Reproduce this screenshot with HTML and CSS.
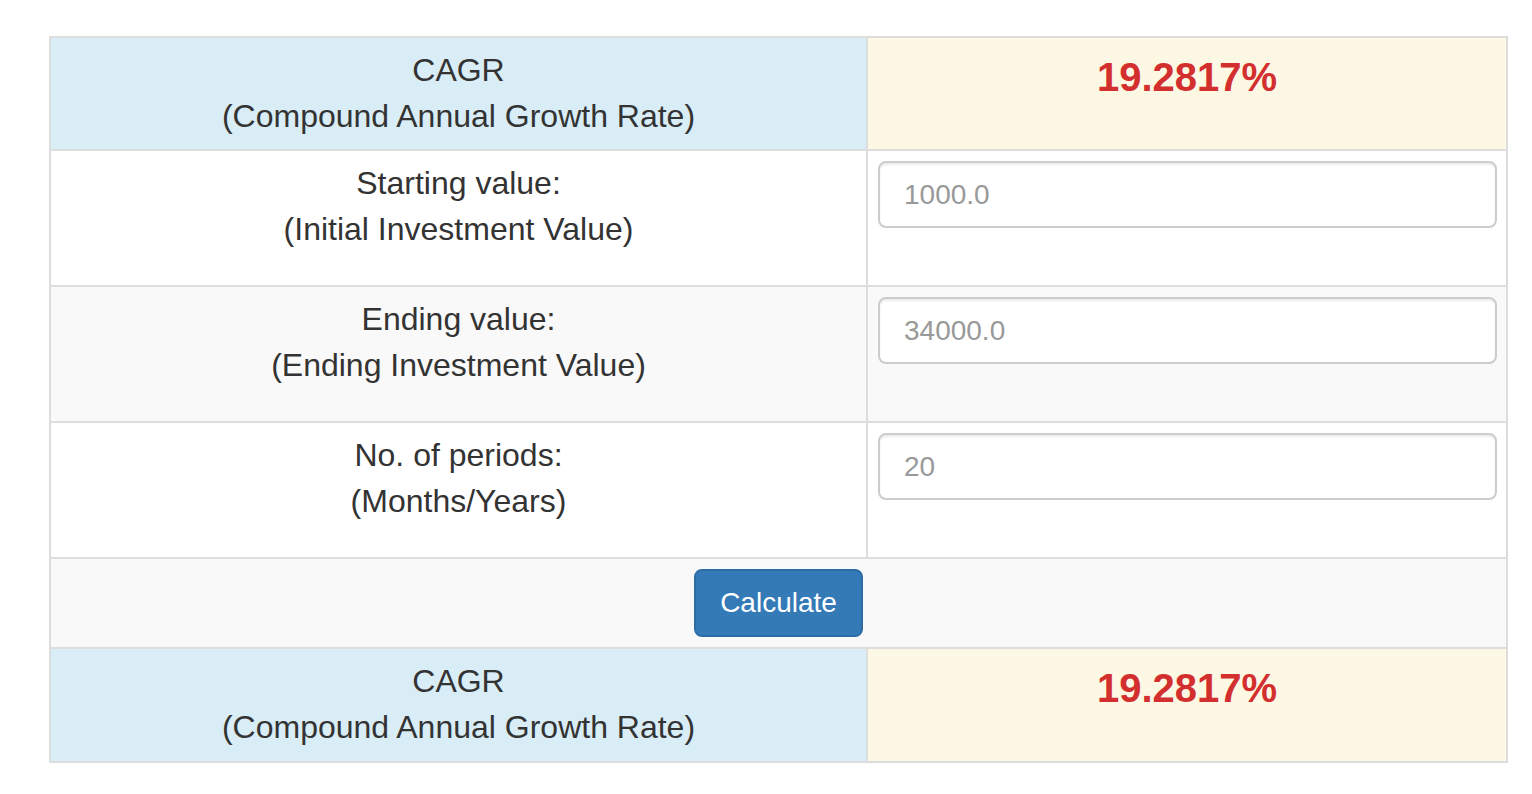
FILE: index.html
```html
<!DOCTYPE html>
<html lang="en">
<head>
<meta charset="utf-8">
<title>CAGR Calculator</title>
<link rel="stylesheet" href="styles.css">
</head>
<body>
<table class="calc">
  <colgroup>
    <col class="col-label">
    <col class="col-value">
  </colgroup>
  <tbody>
    <tr class="row-info">
      <td class="cell-info">CAGR<br>(Compound Annual Growth Rate)</td>
      <td class="cell-warn"><span class="result">19.2817%</span></td>
    </tr>
    <tr class="row-white">
      <td class="label">Starting value:<br>(Initial Investment Value)</td>
      <td class="field"><input class="input" type="text" placeholder="1000.0"></td>
    </tr>
    <tr class="row-grey">
      <td class="label">Ending value:<br>(Ending Investment Value)</td>
      <td class="field"><input class="input" type="text" placeholder="34000.0"></td>
    </tr>
    <tr class="row-white">
      <td class="label">No. of periods:<br>(Months/Years)</td>
      <td class="field"><input class="input" type="text" placeholder="20"></td>
    </tr>
    <tr class="row-grey">
      <td class="action" colspan="2"><button class="btn" type="button">Calculate</button></td>
    </tr>
    <tr class="row-info">
      <td class="cell-info">CAGR<br>(Compound Annual Growth Rate)</td>
      <td class="cell-warn"><span class="result">19.2817%</span></td>
    </tr>
  </tbody>
</table>
</body>
</html>
```
FILE: styles.css
```css
html, body {
  margin: 0;
  padding: 0;
  background: #ffffff;
}

body {
  font-family: "Liberation Sans", Arial, sans-serif;
  font-size: 32px;
  line-height: 1.42857;
  color: #333333;
}

.calc {
  border-collapse: collapse;
  table-layout: fixed;
  width: 1457px;
  margin: 36px 0 0 49px;
  border: 2px solid #dddddd;
}

.col-label {
  width: 817px;
}

.col-value {
  width: 640px;
}

.calc td {
  border: 2px solid #dddddd;
  padding: 10px;
  vertical-align: top;
  text-align: center;
}

.row-white {
  background: #ffffff;
}

.row-grey {
  background: #f9f9f9;
}

.calc .cell-info {
  background: #d9edf7;
}

.calc .cell-warn {
  background: #fcf8e3;
}

.result {
  display: block;
  font-size: 40px;
  font-weight: bold;
  line-height: 57px;
  padding-top: 1px;
  color: #d32f2f;
}

.calc .field {
  text-align: left;
  padding-right: 9px;
}

.input {
  display: block;
  box-sizing: border-box;
  width: 100%;
  height: 67px;
  margin: 0 0 47px 0;
  padding: 12px 24px;
  font-family: "Liberation Sans", Arial, sans-serif;
  font-size: 28px;
  color: #555555;
  background: #ffffff;
  border: 2px solid #cccccc;
  border-radius: 8px;
  box-shadow: inset 0 2px 2px rgba(0, 0, 0, 0.075);
}

.input::placeholder {
  color: #999999;
}

.btn {
  box-sizing: border-box;
  height: 68px;
  padding: 0 24px;
  font-family: "Liberation Sans", Arial, sans-serif;
  font-size: 28px;
  line-height: 1.42857;
  color: #ffffff;
  background: #337ab7;
  border: 2px solid #2e6da4;
  border-radius: 8px;
  cursor: pointer;
}
```
